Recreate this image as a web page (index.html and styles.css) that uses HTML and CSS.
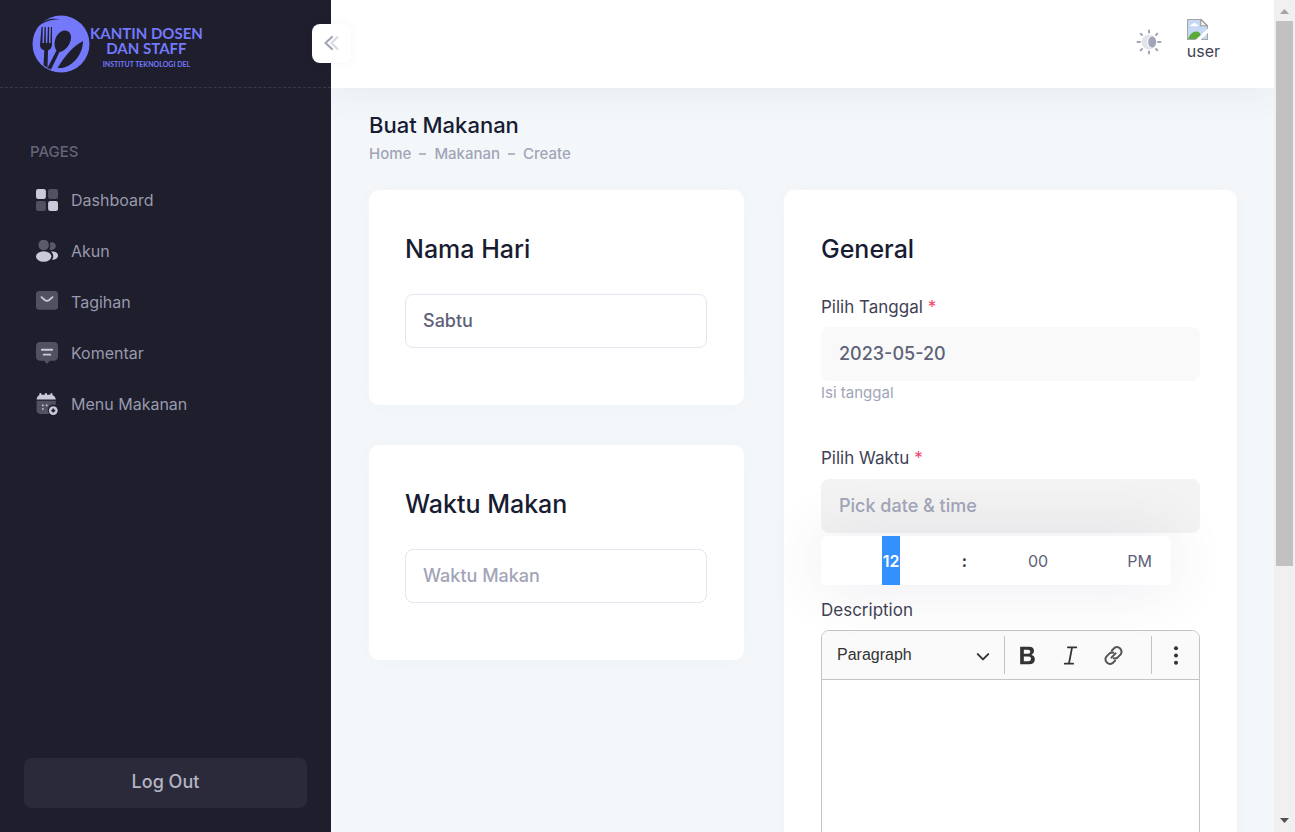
FILE: index.html
```html
<!DOCTYPE html>
<html lang="id">
<head>
<meta charset="utf-8">
<meta name="viewport" content="width=device-width, initial-scale=1">
<title>Buat Makanan</title>
<link rel="stylesheet" href="styles.css">
</head>
<body>
<div class="app">
  <aside class="sidebar">
    <div class="brand">
      <a class="logo" href="#">
        <svg class="logo-mark" viewBox="0 0 58 58" aria-hidden="true">
          <circle cx="29" cy="29" r="28.5" fill="#7479fb"/>
          <g fill="#1e1e2d">
            <path d="M5.500 11.500C12 4.500 19 2.500 28 4.300C19 4.500 13 6.500 5.500 11.500Z"/>
            <path d="M9.500 12H10.700L10.500 28H12L12.600 12H13.800L13.800 28H15.300L15.900 12H17.100L17 28H18.500L18.900 12H20L20 30Q19.500 34 16 35.500L15.500 53L11.500 50L12.300 35.500Q8 34 8 30Z"/>
            <path d="M24.500 35.500C20.500 30 23 20 28.500 17C34 13.500 39.500 17 39 23C38.500 30 33 36 27.500 37L19 54.500L15.500 53Z"/>
            <path d="M51 26C41 31 32 42 25.500 53H30C41 51 51 39 51 26Z"/>
          </g>
        </svg>
        <span class="logo-text">
          <span>KANTIN DOSEN</span>
          <span>DAN STAFF</span>
          <small>INSTITUT TEKNOLOGI DEL</small>
        </span>
      </a>
      <button class="toggle" type="button" aria-label="Toggle sidebar">
        <svg viewBox="0 0 18 18" fill="none" stroke="#a1a5b7" stroke-width="2.200" stroke-linecap="round" stroke-linejoin="round"><path d="M14.500 2L8.500 8L14.500 14" opacity=".4"/><path d="M9 2L2.500 8L9 14"/></svg>
      </button>
    </div>
    <nav class="menu">
      <h2 class="menu-heading">PAGES</h2>
      <a class="menu-item" href="#">
        <svg viewBox="2 2 20 20" fill="#cbcadd"><rect x="2" y="2" width="9" height="9" rx="2"/><rect opacity=".3" x="13" y="2" width="9" height="9" rx="2"/><rect x="13" y="13" width="9" height="9" rx="2"/><rect opacity=".3" x="2" y="13" width="9" height="9" rx="2"/></svg>
        <span>Dashboard</span></a>
      <a class="menu-item" href="#">
        <svg viewBox="2 2 20 20" fill="#cbcadd"><path d="M16.020 11C15.300 11 14.620 10.750 14.100 10.400C14.600 9.500 15 8.200 15 7C15 6.300 14.800 5.500 14.500 4.800C15 4.300 15.700 4 16.500 4C18.400 4 20 5.600 20 7.500C20 9.400 18.400 11 16.020 11Z" opacity=".35"/><circle cx="9" cy="6.500" r="4.800" opacity=".35"/><ellipse cx="9" cy="17" rx="7" ry="4.700"/><path d="M15.500 12.500C19 12.200 22 13.500 22 16C22 18.500 19.500 20 16.500 20C17.300 19 17.700 18 17.700 16.900C17.700 15 16.800 13.500 15.500 12.500Z"/></svg>
        <span>Akun</span></a>
      <a class="menu-item" href="#">
        <svg viewBox="2 2 20 20"><rect opacity=".3" x="2" y="2" width="20" height="17" rx="3" fill="#cbcadd"/><path d="M7 7.500L10 10.200Q12 11.800 14 10.200L17 7.500" fill="none" stroke="#cbcadd" stroke-width="1.600" stroke-linecap="round"/></svg>
        <span>Tagihan</span></a>
      <a class="menu-item" href="#">
        <svg viewBox="2 2 20 20"><path opacity=".3" d="M6 2H18Q22 2 22 6V15Q22 19 18 19H14.500L12.700 21.400Q12 22 11.300 21.400L9.500 19H6Q2 19 2 15V6Q2 2 6 2Z" fill="#cbcadd"/><path d="M7.300 9H16.700M9 13.500H15" stroke="#cbcadd" stroke-width="1.700" stroke-linecap="round"/></svg>
        <span>Komentar</span></a>
      <a class="menu-item" href="#">
        <svg viewBox="2 2 20 20"><path opacity=".3" d="M2.500 9H20V13A5 5 0 0 0 13 19L14 21H6Q2.500 21 2.500 17Z" fill="#cbcadd"/><path d="M2.500 8Q3 4.500 5 4V2.700Q6 1.300 7 2.700V3.700H10V2.700Q11 1.300 12 2.700V3.700H15V2.700Q16 1.300 17 2.700V4Q19.500 4.500 20 8Z" fill="#cbcadd"/><path d="M7.500 13.200H9M11 13.200H12.500M7.500 16.500H9" stroke="#cbcadd" stroke-width="1.500"/><circle cx="17.700" cy="18" r="4" fill="#cbcadd"/><path d="M17.700 16.200V19.800M15.900 18H19.500" stroke="#1e1e2d" stroke-width="1.500"/></svg>
        <span>Menu Makanan</span></a>
    </nav>
    <div class="sidebar-footer"><button class="logout" type="button">Log Out</button></div>
  </aside>

  <div class="page">
    <header class="topbar">
      <button class="theme" type="button" aria-label="Theme">
        <svg viewBox="0 0 26 26"><g stroke="#a1a5b7" stroke-width="2" stroke-linecap="round"><path d="M13 1.500V3.500M13 22.500V24.500M1.500 13H4M22 13H24.500M4.700 4.700L6 6M20 20L21.300 21.300M4.700 21.300L6 20M20 6L21.300 4.700"/></g><circle cx="13" cy="13" r="7.500" fill="#e3e4ea"/><ellipse cx="16.200" cy="13" rx="4.900" ry="6.500" fill="#fff"/><ellipse cx="16.200" cy="13" rx="4" ry="5.800" fill="#a1a5b7"/></svg>
      </button>
      <a class="user" href="#">
        <svg viewBox="0 0 20 20" aria-hidden="true"><path d="M.5.500H13.500L19.500 6.500V19.500H.5Z" fill="#c6d8f4" stroke="#a7a7a7"/><path d="M3 7Q3 5 5 5Q7 2 9 5Q11 5 10.500 7Z" fill="#fff"/><path d="M1 19C3 13 8 10 12 13L15 19Z" fill="#5baa3c"/><path d="M20 9V13L13 20H8Z" fill="#fff"/><path d="M13 .5V6.500H19.500Z" fill="#f4f4f4" stroke="#999"/></svg>
        <span>user</span>
      </a>
    </header>
    <main class="content">
      <div class="page-head">
        <h1>Buat Makanan</h1>
        <nav class="crumbs" aria-label="Breadcrumb"><a href="#">Home</a><i></i><a href="#">Makanan</a><i></i><span>Create</span></nav>
      </div>
      <form class="columns">
        <div class="stack">
          <section class="card">
            <h2><label for="hari">Nama Hari</label></h2>
            <input class="field" id="hari" type="text" value="Sabtu">
          </section>
          <section class="card">
            <h2><label for="makan">Waktu Makan</label></h2>
            <input class="field" id="makan" type="text" placeholder="Waktu Makan">
          </section>
        </div>
        <section class="card general">
          <h2>General</h2>
          <div class="group">
            <label for="tanggal">Pilih Tanggal <b>*</b></label>
            <input class="field solid" id="tanggal" type="text" value="2023-05-20">
            <p class="help">Isi tanggal</p>
          </div>
          <div class="group time-group">
            <label for="waktu">Pilih Waktu <b>*</b></label>
            <input class="field solid active" id="waktu" type="text" placeholder="Pick date &amp; time">
            <div class="picker">
              <input class="selected" type="text" value="12" aria-label="Hour">
              <span>:</span>
              <input type="text" value="00" aria-label="Minute">
              <button type="button">PM</button>
            </div>
          </div>
          <div class="group">
            <label for="description">Description</label>
            <div class="editor">
              <div class="toolbar">
                <div class="style-select">
                  <select aria-label="Heading"><option>Paragraph</option></select>
                  <svg viewBox="0 0 12 12" fill="none" stroke="#333" stroke-width="1.700" stroke-linecap="round" stroke-linejoin="round"><path d="M1.500 3.500L6 8L10.500 3.500"/></svg>
                </div>
                <div class="tools">
                  <button type="button" aria-label="Bold"><svg viewBox="0 0 20 20"><path fill="#333" fill-rule="evenodd" d="M3 1.700H11.500Q16.200 1.700 16.200 5.800Q16.200 8.500 13.700 9.500Q17 10.300 17 13.500Q17 18.300 11.500 18.300H3ZM6.500 4.500V8.400H10.500Q12.700 8.400 12.700 6.400Q12.700 4.500 10.500 4.500ZM6.500 11V15.500H11Q13.400 15.500 13.400 13.200Q13.400 11 11 11Z"/></svg></button>
                  <button type="button" aria-label="Italic"><svg viewBox="0 0 20 20"><path fill="none" stroke="#333" stroke-width="1.700" stroke-linecap="round" d="M7.500 2.200H15.500M4.500 17.800H12.500M11.500 2.200L8.500 17.800"/></svg></button>
                  <button type="button" aria-label="Link"><svg viewBox="0 0 20 20" fill="none" stroke="#555" stroke-width="1.900" stroke-linecap="round"><path d="M8.500 5.200L11 2.700Q13.700.8 16.300 3.300Q18.800 6 16.800 8.900L13.800 12Q12.200 13.200 10.200 12.700M11.500 15L9 17.300Q6.300 19.200 3.700 16.700Q1.200 14 3.200 11.100L6.200 8Q7.800 6.800 9.800 7.300M8 12L12 8"/></svg></button>
                </div>
                <button class="more" type="button" aria-label="More"><svg viewBox="0 0 20 20" fill="#333"><circle cx="10" cy="3" r="1.900"/><circle cx="10" cy="10" r="1.900"/><circle cx="10" cy="17" r="1.900"/></svg></button>
              </div>
              <textarea id="description"></textarea>
            </div>
          </div>
        </section>
      </form>
    </main>
  </div>

  <div class="scrollbar" aria-hidden="true">
    <svg viewBox="0 0 21 21"><path d="M6 14L10.500 9L15 14Z" fill="#a3a3a3"/></svg>
    <div class="track"><div class="thumb"></div></div>
    <svg viewBox="0 0 21 21"><path d="M6 7L10.500 12L15 7Z" fill="#505050"/></svg>
  </div>
</div>
</body>
</html>
```

FILE: styles.css
```css
*, *::before, *::after { box-sizing: border-box; }
body {
  margin: 0;
  font-family: Inter, "Liberation Sans", sans-serif;
  font-size: 16px;
  color: #181c32;
  background: #f5f8fa;
}
h1, h2, p { margin: 0; font-weight: 500; }
a { color: inherit; text-decoration: none; }
svg { display: block; }
button, input, select, textarea { font: inherit; color: inherit; outline: 0; }
button { border: 0; background: none; padding: 0; cursor: pointer; }

.app { display: flex; height: 100vh; overflow: hidden; }

/* Sidebar */
.sidebar {
  position: relative;
  z-index: 2;
  flex: 0 0 331px;
  display: flex;
  flex-direction: column;
  background: #1e1e2d;
}
.brand {
  height: 88px;
  padding: 0 32px;
  display: flex;
  align-items: center;
  border-bottom: 1px dashed #393945;
}
.logo { display: flex; align-items: center; color: #7479fb; }
.logo-mark { width: 58px; height: 58px; }
.logo-text {
  display: flex;
  flex-direction: column;
  align-items: center;
  padding-top: 10px;
  font: 700 15px/15px Lato, sans-serif;
}
.logo-text small { font-size: 7px; line-height: 16px; }
.toggle {
  position: absolute;
  top: 24px;
  right: -20px;
  width: 39px;
  height: 39px;
  display: grid;
  place-items: center;
  border-radius: 8px;
  background: #fff;
  box-shadow: 0 0 10px rgba(82, 63, 105, .05);
}
.toggle svg { width: 18px; height: 18px; }
.menu { flex: 1; padding: 54px 30px 0; display: flex; flex-direction: column; gap: 10px; }
.menu-heading { font-size: 15px; line-height: 20px; font-weight: 500; color: #646477; margin-bottom: 7px; }
.menu-item {
  height: 41px;
  padding-left: 6px;
  display: flex;
  align-items: center;
  gap: 13px;
  color: #9899ac;
}
.menu-item svg { width: 22px; height: 22px; }
.sidebar-footer { padding: 24px; }
.logout {
  width: 100%;
  height: 50px;
  padding-bottom: 3px;
  border-radius: 8px;
  background: #2a2a3a;
  color: #b5b5c3;
  font-size: 18px;
  font-weight: 500;
}

/* Top bar */
.page { flex: 1; min-width: 0; display: flex; flex-direction: column; background: #f3f7fa; overflow: hidden; }
.topbar {
  flex: 0 0 88px;
  padding: 0 54px 8px;
  display: flex;
  align-items: center;
  justify-content: flex-end;
  gap: 25px;
  background: #fff;
  box-shadow: 0 10px 30px rgba(82, 63, 105, .05);
}
.theme { padding-top: 4px; }
.theme svg { width: 26px; height: 26px; }
.user { font-size: 16px; line-height: 22px; color: #3f4254; }
.user svg { width: 21px; height: 21px; }

/* Content */
.content { padding: 23px 37px 40px 38px; }
h1 { font-size: 22px; line-height: 28px; }
.crumbs {
  display: flex;
  align-items: center;
  gap: 8px;
  margin-top: 5px;
  font-size: 15px;
  line-height: 20px;
  font-weight: 500;
  color: #a1a5b7;
}
.crumbs i { width: 7px; height: 2px; background: #b5b5c3; }
.columns { display: grid; grid-template-columns: 375px 1fr; gap: 40px; align-items: start; margin-top: 26px; }
.stack { display: grid; gap: 40px; }
.card {
  min-width: 0;
  padding: 44px 37px 57px 36px;
  border-radius: 10px;
  background: #fff;
  box-shadow: 0 0 20px rgba(76, 87, 125, .02);
}
.card h2 { font-size: 25px; line-height: 30px; margin-bottom: 30px; }
.field {
  display: block;
  width: 100%;
  height: 54px;
  padding: 0 17px 2px;
  border: 1px solid #e4e6ef;
  border-radius: 8px;
  background: #fff;
  color: #5e6278;
  font-size: 18px;
  font-weight: 500;
}
.field::placeholder { color: #a1a5b7; opacity: 1; }
.solid { background: #f9f9f9; border-color: #f9f9f9; }
.solid.active { background: #f3f3f3; border-color: #f3f3f3; }

.general { padding-left: 37px; }
.general h2 { margin-bottom: 32px; }
.group label { display: block; font-size: 17px; line-height: 22px; margin-bottom: 9px; color: #3f4254; }
.group b { font-weight: 400; color: #f1416c; }
.help { font-size: 15px; line-height: 20px; margin-top: 2px; font-weight: 400; color: #a1a5b7; }
.time-group { position: relative; margin: 44px 0 66px; }
.time-group label { margin-bottom: 10px; }
.picker {
  position: absolute;
  top: 100%;
  left: 0;
  width: 350px;
  height: 49px;
  margin-top: 3px;
  display: grid;
  grid-template-columns: 140fr 7fr 140fr 63fr;
  justify-items: center;
  align-items: center;
  border-radius: 6px;
  background: #fff;
  color: #5e6278;
  box-shadow: 0 0 60px rgba(82, 63, 105, .12);
}
.picker input {
  width: 24px;
  height: 49px;
  padding: 0;
  border: 0;
  background: none;
  text-align: center;
}
.picker .selected { width: 18px; background: #3391ff; color: #fff; font-weight: 600; }
.picker span { color: #393939; font-weight: 700; }

/* Editor */
.editor { border: 1px solid #c4c4c4; border-radius: 8px; overflow: hidden; }
.toolbar {
  height: 49px;
  display: flex;
  align-items: center;
  background: #fafafa;
  border-bottom: 1px solid #c4c4c4;
}
.style-select { position: relative; flex: 0 0 182px; }
.style-select select {
  width: 100%;
  height: 38px;
  padding: 0 15px 2px;
  border: 0;
  appearance: none;
  background: none;
  color: #333;
  font-family: "Liberation Sans", Arial, sans-serif;
  font-size: 16px;
}
.style-select svg { position: absolute; right: 14px; top: 14px; width: 14px; height: 14px; pointer-events: none; }
.tools {
  flex: 1;
  height: 38px;
  display: flex;
  align-items: center;
  gap: 18px;
  padding-left: 10px;
  border: solid #c4c4c4;
  border-width: 0 1px;
}
.tools svg { width: 25px; height: 21px; }
.more { flex: 0 0 47px; display: grid; place-items: center; }
.more svg { width: 22px; height: 21px; }
textarea { display: block; width: 100%; height: 400px; border: 0; padding: 16px; resize: none; }

/* Scroll rail */
.scrollbar { flex: 0 0 21px; display: flex; flex-direction: column; background: #f0f0f0; }
.scrollbar svg { width: 21px; height: 21px; }
.track { flex: 1; padding: 0 2px; }
.thumb { height: 69%; background: #c1c1c1; }
```
